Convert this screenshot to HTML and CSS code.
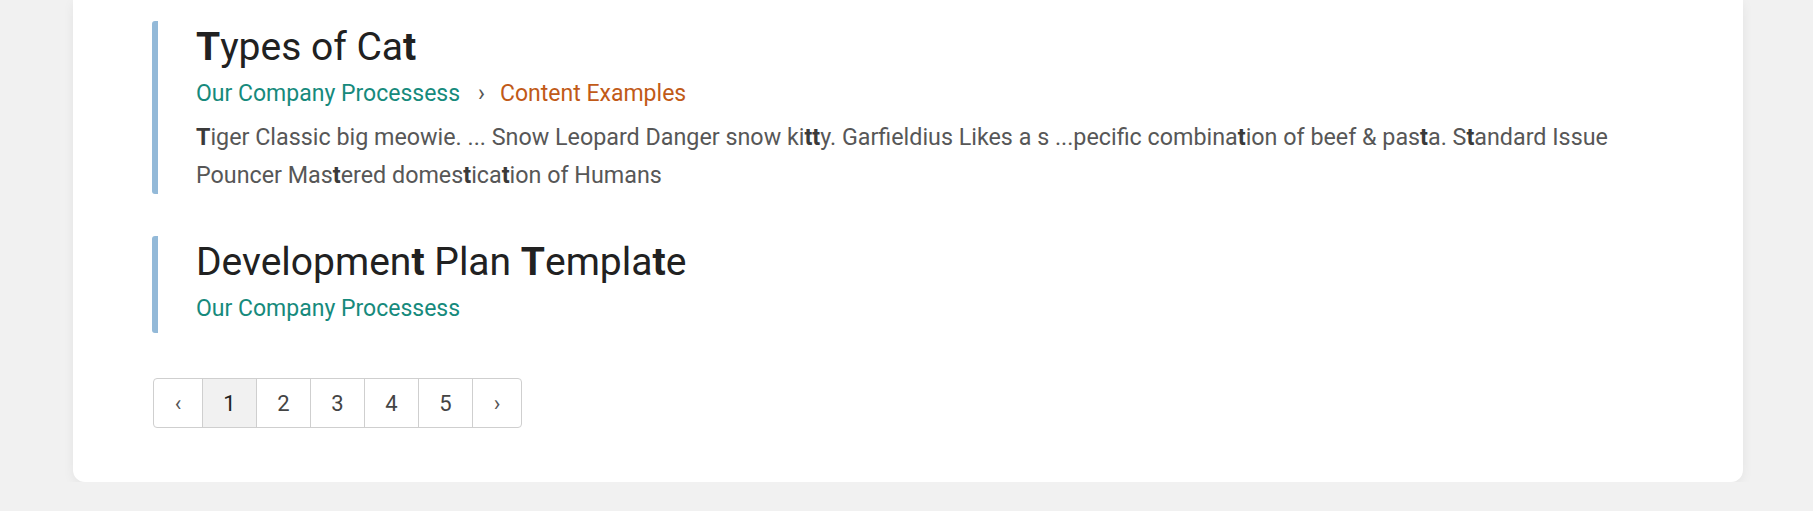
FILE: index.html
```html
<!DOCTYPE html>
<html lang="en">
<head>
<meta charset="utf-8">
<title>Search results</title>
<link rel="stylesheet" href="styles.css">
</head>
<body>
<main class="card">
  <section class="results">
    <article class="result">
      <h2 class="result-title"><b>T</b>ypes of Ca<b>t</b></h2>
      <nav class="crumbs">
        <a class="crumb crumb-space" href="#">Our Company Processess</a>
        <span class="crumb-sep">›</span>
        <a class="crumb crumb-page" href="#">Content Examples</a>
      </nav>
      <p class="excerpt"><b>T</b>iger Classic big meowie. ... Snow Leopard Danger snow ki<b>tt</b>y. Garfieldius Likes a s ...pecific combina<b>t</b>ion of beef &amp; pas<b>t</b>a. S<b>t</b>andard Issue Pouncer Mas<b>t</b>ered domes<b>t</b>ica<b>t</b>ion of Humans</p>
    </article>
    <article class="result">
      <h2 class="result-title">Developmen<b>t</b> Plan <b>T</b>empla<b>t</b>e</h2>
      <nav class="crumbs">
        <a class="crumb crumb-space" href="#">Our Company Processess</a>
      </nav>
    </article>
  </section>
  <nav class="pager">
    <a class="pager-item pager-arrow" href="#">‹</a>
    <a class="pager-item pager-num is-active" href="#">1</a>
    <a class="pager-item pager-num" href="#">2</a>
    <a class="pager-item pager-num" href="#">3</a>
    <a class="pager-item pager-num" href="#">4</a>
    <a class="pager-item pager-num" href="#">5</a>
    <a class="pager-item pager-arrow" href="#">›</a>
  </nav>
</main>
</body>
</html>
```

FILE: styles.css
```css
* {
  box-sizing: border-box;
}

html, body {
  margin: 0;
  padding: 0;
  background: #f1f1f1;
}

body {
  font-family: Roboto, "Liberation Sans", Arial, sans-serif;
  padding: 0 70px 0 73px;
}

.card {
  background: #ffffff;
  border-radius: 0 0 12px 12px;
  box-shadow: 0 3px 12px rgba(0, 0, 0, 0.06);
  padding: 21px 79px 54px 79px;
}

.results {
  display: flex;
  flex-direction: column;
  gap: 42px;
}

.result {
  border-left: 6px solid #93b9d8;
  border-radius: 3px;
  padding: 3px 0 0 38px;
}

.result-title {
  margin: 0;
  font-size: 39px;
  line-height: 46px;
  font-weight: 400;
  color: #212121;
}

.result-title b {
  font-weight: 700;
}

.crumbs {
  display: flex;
  align-items: center;
  margin-top: 8px;
  margin-bottom: 8px;
  font-size: 23px;
  line-height: 32px;
}

.crumb {
  text-decoration: none;
}

.crumb-space {
  color: #168a7c;
}

.crumb-page {
  color: #c15a17;
}

.crumb-sep {
  color: #555555;
  margin: 0 15px 0 18px;
}

.excerpt {
  margin: 1px 0 0 0;
  font-size: 23.3px;
  line-height: 38px;
  color: #575757;
}

.excerpt b {
  font-weight: 700;
  color: #3a3a3a;
}

.pager {
  display: inline-flex;
  margin-top: 45px;
  margin-left: 1px;
  border: 1px solid #cfcfcf;
  border-radius: 4px;
  overflow: hidden;
}

.pager-item {
  display: flex;
  align-items: center;
  justify-content: center;
  height: 48px;
  font-size: 22px;
  color: #444444;
  text-decoration: none;
  border-left: 1px solid #cfcfcf;
}

.pager-item:first-child {
  border-left: none;
  width: 48px;
}

.pager-num {
  width: 54px;
}

.pager-arrow {
  width: 49px;
  font-size: 22px;
  color: #555555;
}

.pager-num.is-active {
  background: #f1f1f1;
  color: #222222;
}
```
